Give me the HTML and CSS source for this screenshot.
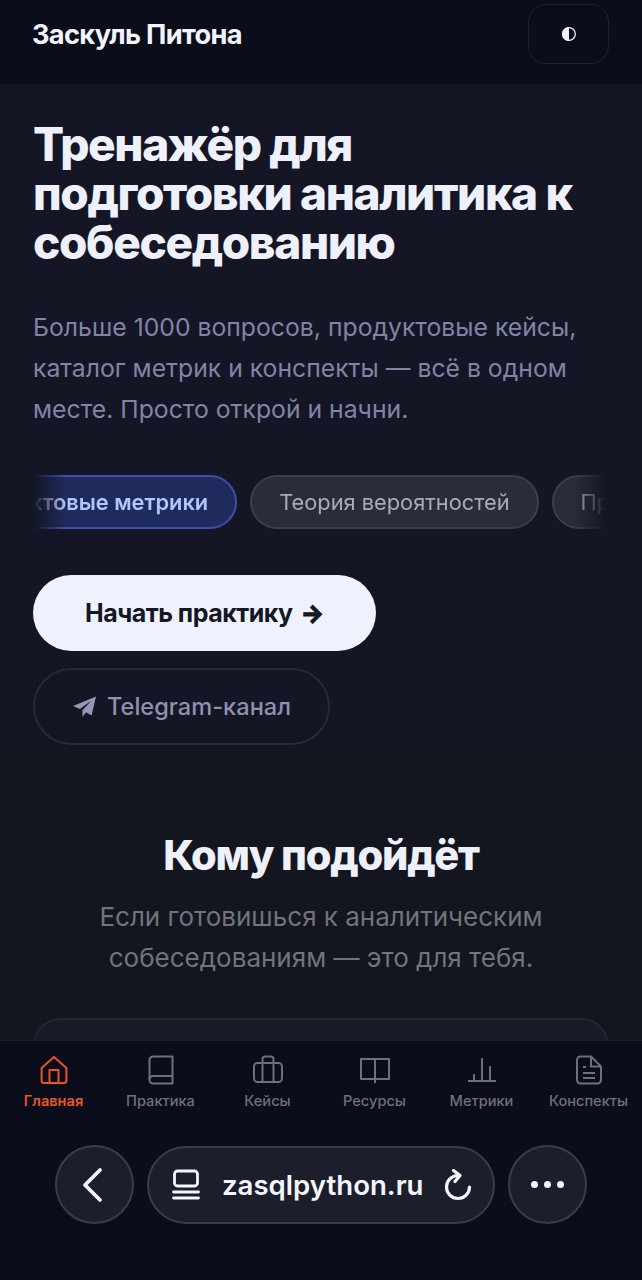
FILE: index.html
```html
<!DOCTYPE html>
<html lang="ru">
<head>
  <meta charset="UTF-8">
  <meta name="viewport" content="width=device-width, initial-scale=1.0">
  <title>Заскуль Питона</title>
  <link rel="stylesheet" href="styles.css">
</head>
<body>
  <header class="topbar">
    <div class="brand">Заскуль Питона</div>
    <button class="theme-btn" type="button">
      <svg viewBox="0 0 14 14" width="14" height="14"><circle cx="7" cy="7" r="6.300" fill="none" stroke="#eef0fb" stroke-width="1.300"/><path d="M7 0a7 7 0 0 0 0 14z" fill="#eef0fb"/></svg>
    </button>
  </header>
  <main>
    <section class="hero">
      <h1>Тренажёр для подготовки аналитика к собеседованию</h1>
      <p class="lead">Больше 1000 вопросов, продуктовые кейсы, каталог метрик и конспекты — всё в одном месте. Просто открой и начни.</p>
      <div class="chips">
        <div class="chips-track">
          <span class="chip chip-active">Продуктовые метрики</span>
          <span class="chip">Теория вероятностей</span>
          <span class="chip">Продуктовые кейсы</span>
        </div>
      </div>
      <div class="actions">
        <a class="btn btn-primary" href="#">Начать практику <span class="arrow">→</span></a>
        <a class="btn btn-ghost" href="#">
          <svg class="tg-icon" viewBox="0 0 24 24" width="25" height="25"><path d="M23 2.500 1 11.600l6.600 2.700L18.500 6.500 10 15.600v6.200l3.600-4.400 5.200 3.200z" fill="currentColor"/></svg>
          Telegram-канал
        </a>
      </div>
    </section>
    <section class="audience">
      <h2>Кому подойдёт</h2>
      <p>Если готовишься к аналитическим собеседованиям — это для тебя.</p>
      <div class="card"></div>
    </section>
  </main>

  <div class="bottom">
    <nav class="tabs">
      <a class="tab tab-active" href="#">
        <svg viewBox="0 0 30 30" width="30" height="30"><path d="M15 2 2.600 13v12.500a2.500 2.500 0 0 0 2.500 2.500h19.800a2.500 2.500 0 0 0 2.500-2.500V13z"/><path d="M10.500 28V15h9v13"/></svg>
        <span>Главная</span>
      </a>
      <a class="tab" href="#">
        <svg viewBox="0 0 30 30" width="30" height="30"><path d="M26.500 1.500H7a3.500 3.500 0 0 0-3.500 3.500v20a3.500 3.500 0 0 0 3.500 3.500h19.500z"/><path d="M3.500 24.500a3.500 3.500 0 0 1 3.500-3.500h19.500"/></svg>
        <span>Практика</span>
      </a>
      <a class="tab" href="#">
        <svg viewBox="0 0 30 30" width="30" height="30"><rect x="1" y="8" width="28" height="19" rx="3.500"/><path d="M9.500 8V4a2.500 2.500 0 0 1 2.500-2.500h6A2.500 2.500 0 0 1 20.500 4v23M9.500 8v19"/></svg>
        <span>Кейсы</span>
      </a>
      <a class="tab" href="#">
        <svg viewBox="0 0 30 30" width="30" height="30"><path d="M15 4H1v20h14zM15 4h14v20H15z"/><path d="M15 4v24"/></svg>
        <span>Ресурсы</span>
      </a>
      <a class="tab" href="#">
        <svg viewBox="0 0 30 30" width="30" height="30"><path d="M1 26h28M7 26v-7M15 26V3M23 26V11"/></svg>
        <span>Метрики</span>
      </a>
      <a class="tab" href="#">
        <svg viewBox="0 0 30 30" width="30" height="30"><path d="M17 1.500H6.500A3.500 3.500 0 0 0 3 5v20a3.500 3.500 0 0 0 3.500 3.500h17A3.500 3.500 0 0 0 27 25V11.500z"/><path d="M17 1.500v10h10M9 12h3M9 18h12M9 23h12"/></svg>
        <span>Конспекты</span>
      </a>
    </nav>
    <div class="browser">
      <button class="round" type="button">
        <svg class="back-icon" viewBox="0 0 24 36" width="24" height="36"><path d="M19 3 4 18l15 15"/></svg>
      </button>
      <div class="url">
        <svg class="url-icon" viewBox="0 0 28 32" width="28" height="32"><rect x="2.500" y="2" width="23" height="15" rx="3"/><path d="M1.500 23h25M1.500 29h25"/></svg>
        <span class="url-text">zasqlpython.ru</span>
        <svg class="url-reload" viewBox="0 0 28 32" width="28" height="32"><path d="M14 6.500A11.500 11.500 0 1 0 25.500 18"/><path d="M9.500 1.500 16 6.500 11 12.500"/></svg>
      </div>
      <button class="round" type="button">
        <span class="dots"><i></i><i></i><i></i></span>
      </button>
    </div>
  </div>
</body>
</html>
```

FILE: styles.css
```css
* {
  box-sizing: border-box;
}
html, body {
  height: 100%;
}
body {
  margin: 0;
  height: 1280px;
  overflow: hidden;
  background-color: #13161f;
  font-family: Inter, "Noto Sans", sans-serif;
  color: #eef0fb;
}
a {
  text-decoration: none;
  color: inherit;
}
button {
  font-family: inherit;
  color: inherit;
}

.topbar {
  height: 85px;
  padding: 4px 33px 16px 32px;
  display: flex;
  align-items: flex-start;
  justify-content: space-between;
  background-color: #0b0d1a;
  border-bottom: 1px solid #151826;
}
.brand {
  margin-top: 14px;
  font-size: 27.200px;
  line-height: 33px;
  font-weight: 700;
  letter-spacing: -0.025em;
  color: #f2f4fd;
}
.theme-btn {
  width: 81px;
  height: 60px;
  display: flex;
  align-items: center;
  justify-content: center;
  padding: 0;
  border: 1px solid #1f2231;
  border-radius: 18px;
  background: transparent;
}

.hero {
  padding: 35px 33px 22px;
  height: 685px;
  background: linear-gradient(to bottom, #141625 90%, #13161f 100%);
}
h1 {
  margin: 0;
  font-size: 46px;
  line-height: 49px;
  font-weight: 800;
  letter-spacing: -0.03em;
  color: #eef0fb;
}
.lead {
  margin: 40px 0 0;
  font-size: 24.750px;
  line-height: 41px;
  color: #8085a5;
}
.chips {
  margin: 45px 3px 0 0;
  overflow: hidden;
  -webkit-mask-image: linear-gradient(to right, transparent 0, #000 32px, #000 calc(100% - 32px), transparent 100%);
  mask-image: linear-gradient(to right, transparent 0, #000 32px, #000 calc(100% - 32px), transparent 100%);
}
.chips-track {
  display: flex;
  gap: 13px;
  margin-left: -102px;
  width: max-content;
}
.chip {
  height: 54px;
  padding: 0 27px;
  display: flex;
  align-items: center;
  border: 2px solid #3c3e4d;
  border-radius: 27px;
  background-color: #2a2c3a;
  font-size: 21.800px;
  color: #a9abb6;
}
.chip-active {
  border-color: #3f4fa6;
  background-color: #1f2b5c;
  color: #b6c4f7;
  font-weight: 600;
}
.actions {
  margin-top: 46px;
  display: flex;
  flex-direction: column;
  align-items: flex-start;
  gap: 17px;
}
.btn {
  height: 77px;
  display: flex;
  align-items: center;
  border-radius: 39px;
}
.btn-primary {
  width: 343px;
  height: 76px;
  padding-left: 52px;
  background-color: #eff1fd;
  color: #141724;
  font-size: 25px;
  font-weight: 700;
  letter-spacing: -0.02em;
}
.arrow {
  margin-left: 8px;
  font-weight: 800;
  -webkit-text-stroke: 0.8px #141724;
}
.btn-ghost {
  width: 297px;
  padding-left: 37px;
  gap: 10px;
  border: 2px solid #272a38;
  font-size: 23.600px;
  color: #8f91af;
  font-weight: 500;
}
.tg-icon {
  color: #9597b8;
}

.audience {
  padding-top: 60px;
  text-align: center;
}
h2 {
  margin: 0;
  font-size: 41.600px;
  line-height: 50px;
  font-weight: 800;
  letter-spacing: -0.03em;
  color: #eef0fb;
}
.audience p {
  margin: 16px auto 0;
  width: 520px;
  font-size: 26px;
  line-height: 41px;
  color: #71737d;
}
.card {
  margin: 40px 33px 0;
  height: 200px;
  border: 2px solid #242733;
  border-radius: 28px;
  background-color: #181b26;
}

.bottom {
  position: fixed;
  left: 0;
  right: 0;
  bottom: 0;
  height: 240px;
  background-color: #0b0d1a;
  border-top: 1px solid #1c1f2c;
}
.tabs {
  height: 104px;
  padding-top: 14px;
  display: flex;
}
.tab {
  flex: 1;
  display: flex;
  flex-direction: column;
  align-items: center;
  gap: 7px;
  font-size: 14.600px;
  line-height: 18px;
  font-weight: 500;
  color: #6f7079;
}
.tab svg {
  fill: none;
  stroke: #6f7079;
  stroke-width: 2;
  stroke-linejoin: round;
}
.tab-active {
  color: #e8552b;
  font-weight: 600;
}
.tab-active svg {
  stroke: #e8552b;
}

.browser {
  padding: 0 55px;
  display: flex;
  align-items: center;
  gap: 13px;
}
.round {
  width: 79px;
  height: 79px;
  flex: none;
  display: flex;
  align-items: center;
  justify-content: center;
  padding: 0;
  border: 2px solid #3a3c4b;
  border-radius: 50%;
  background-color: #1c1e2c;
}
.round svg, .url svg {
  fill: none;
  stroke: #f4f5fb;
  stroke-width: 3.200;
  stroke-linecap: round;
  stroke-linejoin: round;
}
.round .back-icon {
  margin-right: 4px;
  stroke-width: 3.800;
}
.url .url-icon {
  stroke-width: 2.800;
}
.dots {
  display: flex;
  gap: 6px;
}
.dots i {
  width: 7px;
  height: 7px;
  border-radius: 50%;
  background-color: #f4f5fb;
}
.url {
  flex: 1;
  height: 78px;
  padding: 0 21px 0 23px;
  display: flex;
  align-items: center;
  border: 2px solid #3a3c4b;
  border-radius: 39px;
  background-color: #1c1e2c;
}
.url-text {
  margin: 0 auto 0 22px;
  font-size: 27.600px;
  font-weight: 600;
  color: #f4f5fb;
}
```
